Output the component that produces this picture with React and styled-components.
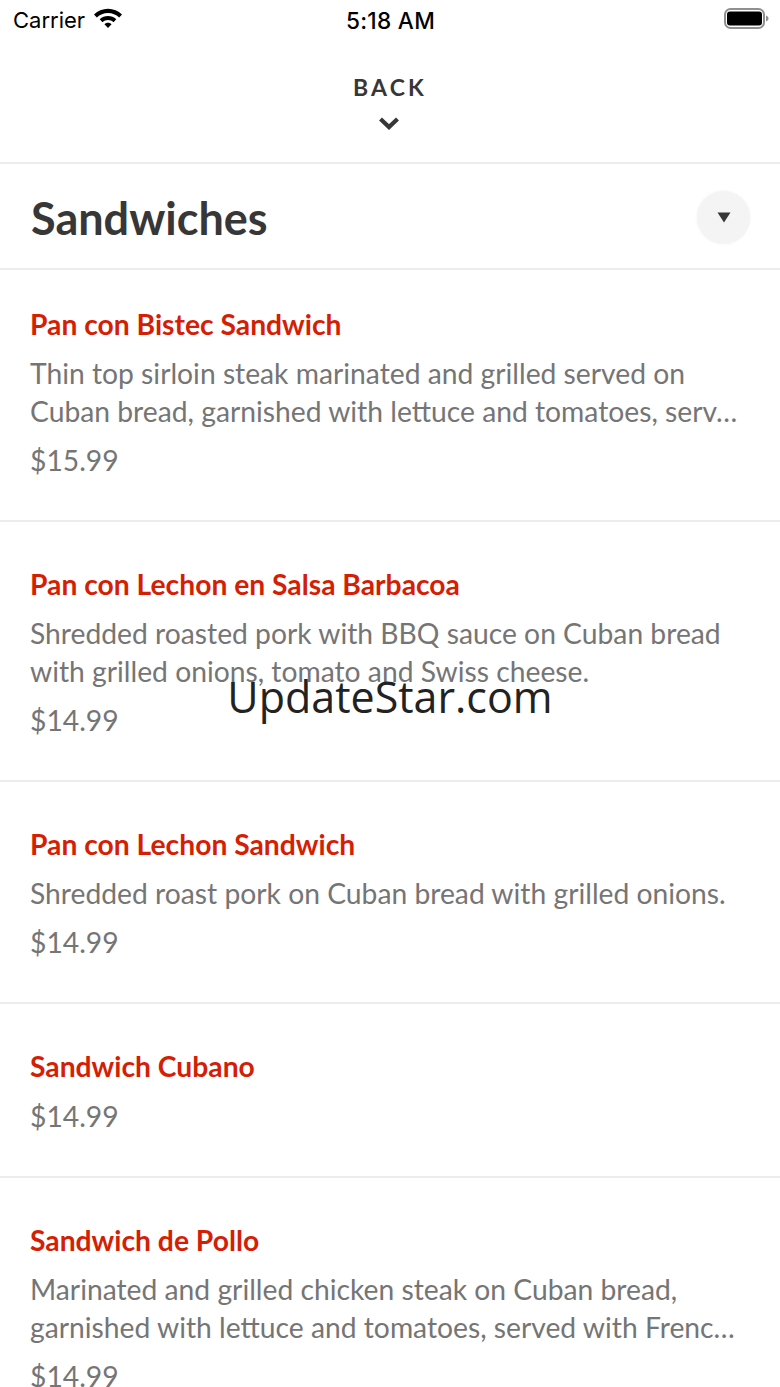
import React from "react";
import styled, { createGlobalStyle } from "styled-components";

const ITEMS = [
  {
    name: "Pan con Bistec Sandwich",
    lines: [
      "Thin top sirloin steak marinated and grilled served on",
      "Cuban bread, garnished with lettuce and tomatoes, serv…",
    ],
    price: "$15.99",
    height: 252,
    top: 37,
  },
  {
    name: "Pan con Lechon en Salsa Barbacoa",
    lines: [
      "Shredded roasted pork with BBQ sauce on Cuban bread",
      "with grilled onions, tomato and Swiss cheese.",
    ],
    price: "$14.99",
    height: 260,
    top: 45,
  },
  {
    name: "Pan con Lechon Sandwich",
    lines: ["Shredded roast pork on Cuban bread with grilled onions."],
    price: "$14.99",
    height: 222,
    top: 45,
  },
  { name: "Sandwich Cubano", lines: [], price: "$14.99", height: 174, top: 45 },
  {
    name: "Sandwich de Pollo",
    lines: [
      "Marinated and grilled chicken steak on Cuban bread,",
      "garnished with lettuce and tomatoes, served with Frenc…",
    ],
    price: "$14.99",
    height: 261,
    top: 45,
  },
];

const GlobalStyle = createGlobalStyle`
  html, body {
    margin: 0;
    background: #fff;
  }
  body {
    font-family: Lato, "Liberation Sans", sans-serif;
  }
`;

const Page = styled.div`
  position: relative;
  width: 780px;
  height: 1387px;
  overflow: hidden;
  background: #fff;
`;

const StatusBar = styled.div`
  height: 40px;
  padding: 0 11px 0 13px;
  box-sizing: border-box;
  display: grid;
  grid-template-columns: 1fr auto 1fr;
  align-items: center;
  color: #000;
  font-family: Inter, "Liberation Sans", sans-serif;
`;

const StatusLeft = styled.div`
  display: flex;
  align-items: center;
  gap: 9px;
  font-size: 22px;
  font-weight: 400;
`;

const WifiIcon = styled.svg`
  margin-top: -3px;
`;

const Clock = styled.div`
  font-size: 22.6px;
  font-weight: 500;
  letter-spacing: 0.3px;
  margin-left: -1px;
`;

const StatusRight = styled.div`
  display: flex;
  justify-content: flex-end;
  margin-top: -2px;
`;

const BackBar = styled.div`
  height: 124px;
  box-sizing: border-box;
  border-bottom: 2px solid #ececec;
  padding-top: 33px;
  display: flex;
  flex-direction: column;
  align-items: center;
  color: #373737;
`;

const BackLabel = styled.div`
  font-size: 23px;
  line-height: 28px;
  font-weight: 700;
  letter-spacing: 3.2px;
`;

const Chevron = styled.svg`
  margin: 15px 3px 0 0;
`;

const SectionHeader = styled.div`
  height: 106px;
  box-sizing: border-box;
  padding: 0 30px 0 31px;
  border-bottom: 2px solid #ececec;
  display: flex;
  align-items: center;
  justify-content: space-between;
`;

const SectionTitle = styled.h1`
  margin: 4px 0 0;
  font-size: 45px;
  font-weight: 700;
  color: #373737;
`;

const Toggle = styled.div`
  width: 53px;
  height: 53px;
  margin-top: 3px;
  border-radius: 50%;
  background: #f4f4f4;
  box-shadow: 0 0 3px rgba(0, 0, 0, 0.05);
  display: flex;
  align-items: center;
  justify-content: center;
`;

const Row = styled.div`
  padding: ${({ $top }) => $top}px 30px 0;
  height: ${({ $height }) => $height}px;
  box-sizing: border-box;
  border-bottom: 2px solid #ececec;
`;

const ItemName = styled.div`
  font-size: 28.25px;
  line-height: 34px;
  font-weight: 700;
  color: #d41e05;
`;

const ItemDesc = styled.div`
  margin-top: 13px;
  font-size: 28.25px;
  line-height: 38px;
  color: #757575;
  white-space: nowrap;
`;

const ItemPrice = styled.div`
  margin-top: ${({ $tight }) => ($tight ? 14 : 11)}px;
  font-size: 28.25px;
  line-height: 38px;
  color: #757575;
`;

const Watermark = styled.div`
  position: absolute;
  left: 0;
  right: 0;
  top: 667px;
  text-align: center;
  font-family: "Open Sans", "Noto Sans", sans-serif;
  font-size: 43px;
  font-weight: 400;
  line-height: 60px;
  color: #222;
`;

export default function App() {
  return (
    <Page>
      <GlobalStyle />
      <StatusBar>
        <StatusLeft>
          Carrier
          <WifiIcon width="28" height="21" viewBox="1.5 1.5 26 19">
            <path
              d="M14.500 2C9.500 2 5 4 1.500 7.200l2.600 2.800C7 7.400 10.600 5.900 14.500 5.900s7.500 1.500 10.400 4.100l2.600-2.800C24 4 19.500 2 14.500 2z"
              fill="#000"
            />
            <path
              d="M14.500 8.600c-2.900 0-5.600 1.100-7.700 3l2.600 2.800c1.400-1.200 3.100-1.900 5.100-1.900s3.700.7 5.100 1.900l2.600-2.800c-2.100-1.900-4.800-3-7.700-3z"
              fill="#000"
            />
            <path d="M14.500 15c-1.300 0-2.400.5-3.300 1.300l3.300 3.600 3.300-3.600c-.9-.8-2-1.300-3.300-1.300z" fill="#000" />
          </WifiIcon>
        </StatusLeft>
        <Clock>5:18 AM</Clock>
        <StatusRight>
          <svg width="46" height="22" viewBox="0 0 46 22">
            <rect x="2" y="1" width="39" height="19" rx="5.500" fill="none" stroke="#8f8f8f" strokeWidth="2" />
            <rect x="4" y="3.500" width="35" height="14" rx="3" fill="#000" />
            <path d="M43 7.500c1.500.5 2.500 1.600 2.500 3s-1 2.500-2.500 3z" fill="#8f8f8f" />
          </svg>
        </StatusRight>
      </StatusBar>
      <BackBar>
        <BackLabel>BACK</BackLabel>
        <Chevron width="22" height="15" viewBox="0 0 22 15">
          <path d="M2.500 3l8.500 8 8.500-8" fill="none" stroke="#373737" strokeWidth="4.200" />
        </Chevron>
      </BackBar>
      <SectionHeader>
        <SectionTitle>Sandwiches</SectionTitle>
        <Toggle>
          <svg width="14" height="11" viewBox="0 0 14 11">
            <path d="M0.500 0.500h13L7 10.500z" fill="#373737" />
          </svg>
        </Toggle>
      </SectionHeader>
      {ITEMS.map((item) => (
        <Row key={item.name} $height={item.height} $top={item.top}>
          <ItemName>{item.name}</ItemName>
          {item.lines.length > 0 && (
            <ItemDesc>
              {item.lines.map((line) => (
                <div key={line}>{line}</div>
              ))}
            </ItemDesc>
          )}
          <ItemPrice $tight={item.lines.length === 0}>{item.price}</ItemPrice>
        </Row>
      ))}
      <Watermark>UpdateStar.com</Watermark>
    </Page>
  );
}
